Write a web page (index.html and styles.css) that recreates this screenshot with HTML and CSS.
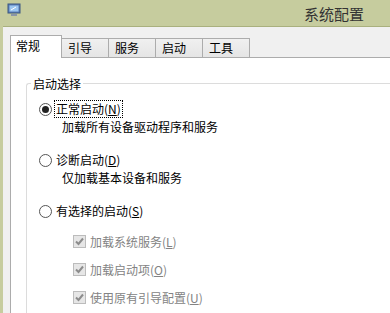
FILE: index.html
```html
<!DOCTYPE html>
<html lang="zh-CN">
<head>
  <meta charset="UTF-8">
  <title>系统配置</title>
  <link rel="stylesheet" href="styles.css">
</head>
<body>
  <div class="window">
    <div class="titlebar">
      <svg class="app-icon" width="14" height="14" viewBox="0 0 14 14">
        <rect x="1" y="1" width="12" height="9" fill="#5a7fb8" stroke="#3b5680" stroke-width="1"/>
        <rect x="2.5" y="2.5" width="9" height="6" fill="#9cc6f0"/>
        <path d="M4 7 L9 4" stroke="#ffffff" stroke-width="1"/>
        <rect x="4" y="11" width="6" height="2" fill="#8a96a8"/>
      </svg>
      <div class="title">系统配置</div>
    </div>
    <div class="body">
      <div class="tabs">
        <div class="tab active">常规</div>
        <div class="tab">引导</div>
        <div class="tab">服务</div>
        <div class="tab">启动</div>
        <div class="tab">工具</div>
      </div>
      <div class="panel">
        <fieldset class="group">
          <legend>启动选择</legend>

          <div class="option first">
            <span class="radio checked"></span>
            <span class="label focus">正常启动(<u>N</u>)</span>
          </div>
          <div class="desc">加载所有设备驱动程序和服务</div>

          <div class="option">
            <span class="radio"></span>
            <span class="label">诊断启动(<u>D</u>)</span>
          </div>
          <div class="desc">仅加载基本设备和服务</div>

          <div class="option">
            <span class="radio"></span>
            <span class="label">有选择的启动(<u>S</u>)</span>
          </div>

          <div class="checks">
            <div class="check">
              <span class="box">
                <svg width="11" height="11" viewBox="0 0 11 11"><path d="M2 5.5 L4.5 8 L9 2.5" fill="none" stroke="#8c8c8c" stroke-width="2"/></svg>
              </span>
              <span>加载系统服务(<u>L</u>)</span>
            </div>
            <div class="check">
              <span class="box">
                <svg width="11" height="11" viewBox="0 0 11 11"><path d="M2 5.5 L4.5 8 L9 2.5" fill="none" stroke="#8c8c8c" stroke-width="2"/></svg>
              </span>
              <span>加载启动项(<u>O</u>)</span>
            </div>
            <div class="check">
              <span class="box">
                <svg width="11" height="11" viewBox="0 0 11 11"><path d="M2 5.5 L4.5 8 L9 2.5" fill="none" stroke="#8c8c8c" stroke-width="2"/></svg>
              </span>
              <span>使用原有引导配置(<u>U</u>)</span>
            </div>
          </div>
        </fieldset>
      </div>
    </div>
  </div>
</body>
</html>
```

FILE: styles.css
```css
html, body {
  margin: 0;
  padding: 0;
  height: 100%;
  overflow: hidden;
}
body {
  font-family: "Noto Sans CJK SC", "Noto Sans", sans-serif;
  font-size: 12px;
  color: #000;
  background-color: #c6cc9e;
}
.window {
  height: 100%;
  border-left: 3px solid #c6cc9e;
  display: flex;
  flex-direction: column;
}
.titlebar {
  height: 26px;
  flex-shrink: 0;
  display: flex;
  align-items: center;
  position: relative;
  background-color: #c6cc9e;
  border-bottom: 1px solid #a9b07e;
}
.app-icon {
  margin-left: 4px;
  margin-top: -6px;
}
.title {
  position: absolute;
  left: 301px;
  top: 3px;
  font-size: 15px;
  color: #333;
}
.body {
  flex: 1;
  min-height: 0;
  background-color: #f0f0f0;
  padding: 8px 0 0 7px;
  display: flex;
  flex-direction: column;
}
.tabs {
  display: flex;
  align-items: flex-end;
  height: 22px;
  flex-shrink: 0;
  position: relative;
  z-index: 1;
}
.tab {
  height: 18px;
  line-height: 18px;
  padding: 0 0 0 6px;
  width: 40px;
  border: 1px solid #acacac;
  border-bottom: none;
  border-left: none;
  background: linear-gradient(#f0f0f0, #e5e5e5);
}
.tab.active {
  height: 22px;
  line-height: 20px;
  width: 45px;
  border-left: 1px solid #acacac;
  background: #fff;
  margin-bottom: -1px;
  padding-left: 5px;
}
.panel {
  flex: 1;
  min-height: 0;
  display: flex;
  flex-direction: column;
  background-color: #fff;
  border: 1px solid #acacac;
  border-right: none;
  border-bottom: none;
  padding: 17px 0 0 15px;
}
.group {
  flex: 1;
  min-height: 0;
  margin: 0;
  padding: 7px 0 0 12px;
  border: 1px solid #dcdcdc;
  border-right: none;
  border-bottom: none;
  border-radius: 3px 0 0 0;
}
.group legend {
  padding: 0 2px;
  margin-left: -8px;
  color: #000;
}
.option {
  display: flex;
  align-items: center;
  height: 18px;
}
.option.first {
  margin-top: 1px;
}
.radio {
  width: 11px;
  height: 11px;
  border: 1px solid #555;
  border-radius: 50%;
  background: #fff;
  position: relative;
  margin-right: 3px;
}
.radio.checked::after {
  content: "";
  position: absolute;
  left: 2px;
  top: 2px;
  width: 7px;
  height: 7px;
  border-radius: 50%;
  background: #222;
}
.label {
  padding: 0 1px;
  line-height: 16px;
}
.label.focus {
  outline: 1px dotted #000;
}
.desc {
  margin: 0 0 16px 23px;
  line-height: 17px;
}
.checks {
  margin: 12px 0 0 34px;
  color: #838383;
}
.check {
  display: flex;
  align-items: center;
  height: 18px;
  margin-bottom: 10px;
}
.box {
  width: 11px;
  height: 11px;
  border: 1px solid #bcbcbc;
  background: #e6e6e6;
  margin-right: 4px;
  display: flex;
  align-items: center;
  justify-content: center;
}
u {
  text-decoration: underline;
}
```
